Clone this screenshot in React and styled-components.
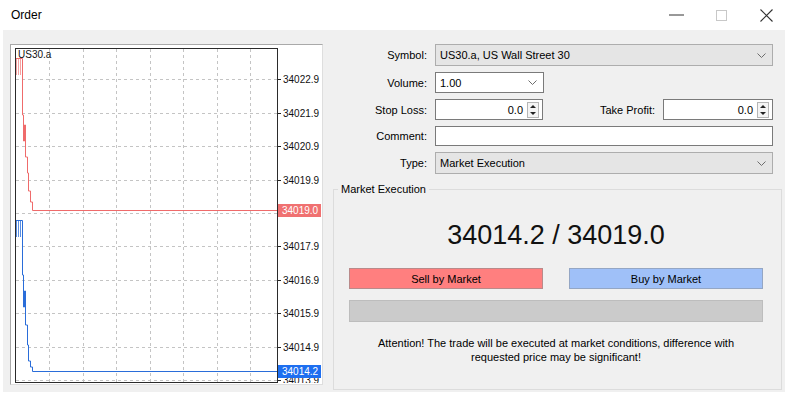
import * as React from 'react';
import styled, { createGlobalStyle } from 'styled-components';

const GlobalStyle = createGlobalStyle`
    html, body {
        margin: 0;
        padding: 0;
        background: #fff;
    }
    body {
        font-family: "Liberation Sans", Arial, sans-serif;
        font-size: 11px;
        color: #000;
    }
`;

const Window = styled.div`
    width: 794px;
    height: 404px;
    background: #fff;
    display: flex;
    flex-direction: column;
`;

const TitleBar = styled.div`
    height: 30px;
    display: flex;
    align-items: center;
    justify-content: space-between;
    padding: 0 5px 0 11px;
`;

const Title = styled.div`
    font-size: 12px;
    color: #000;
`;

const Controls = styled.div`
    display: flex;
    height: 100%;
`;

const CtrlButton = styled.div`
    width: 45px;
    height: 100%;
    display: flex;
    align-items: center;
    justify-content: center;
`;

const Body = styled.div`
    height: 362px;
    margin: 0 9px 0 3px;
    padding: 14px 0 2px 7px;
    box-sizing: border-box;
    background: #f0f0f0;
    display: flex;
    gap: 10px;
`;

const ChartPanel = styled.div`
    width: 313px;
    height: 341px;
    box-sizing: border-box;
    background: #fff;
    border-top: 1px solid #a9a9a9;
    border-left: 1px solid #a9a9a9;
    border-right: 1px solid #dedede;
    border-bottom: 1px solid #dedede;
    overflow: hidden;
`;

const Side = styled.div`
    width: 449px;
    display: flex;
    flex-direction: column;
`;

const Form = styled.div`
    display: grid;
    grid-template-columns: 94px 1fr;
    column-gap: 8px;
    row-gap: 6px;
    padding-right: 9px;
`;

const Label = styled.div`
    text-align: right;
    align-self: center;
    white-space: nowrap;
`;

const FieldRow = styled.div`
    display: flex;
    align-items: center;
    height: ${p => p.$h}px;
`;

const Select = styled.div`
    box-sizing: border-box;
    height: ${p => p.$h}px;
    width: ${p => (p.$w ? `${p.$w}px` : '100%')};
    background: ${p => (p.$gray ? '#e5e5e5' : '#fff')};
    border: 1px solid ${p => (p.$gray ? '#adadad' : '#7a7a7a')};
    display: flex;
    align-items: center;
    justify-content: space-between;
    padding: 0 6px 0 4px;
`;

const TextInput = styled.div`
    box-sizing: border-box;
    height: ${p => p.$h}px;
    width: 100%;
    background: #fff;
    border: 1px solid #7a7a7a;
`;

const SpinBox = styled.div`
    box-sizing: border-box;
    height: 21px;
    width: ${p => p.$w}px;
    background: #fff;
    border: 1px solid #7a7a7a;
    display: flex;
    align-items: center;
    justify-content: flex-end;
    padding-right: 3px;
    gap: 4px;
`;

const Spinner = styled.div`
    box-sizing: border-box;
    width: 12px;
    height: 16px;
    border: 1px solid #b5b5b5;
    background: #f4f4f4;
    display: flex;
    flex-direction: column;
    justify-content: space-around;
    align-items: center;
`;

const Arrow = styled.div`
    width: 0;
    height: 0;
    border-left: 3px solid transparent;
    border-right: 3px solid transparent;
    ${p => (p.$up ? 'border-bottom: 3px solid #222;' : 'border-top: 3px solid #222;')}
`;

const InlineLabel = styled.div`
    flex: 1;
    text-align: right;
    padding-right: 8px;
`;

const Group = styled.fieldset`
    flex: 1;
    margin: 8px 0 0 0;
    min-width: 0;
    border: 1px solid #dcdcdc;
    padding: 0 18px 0 15px;
    display: flex;
    flex-direction: column;
`;

const Legend = styled.legend`
    font-size: 11px;
    line-height: 14px;
    padding: 0 3px;
    margin-left: -11px;
`;

const Quote = styled.div`
    margin-top: 26px;
    font-size: 27px;
    line-height: 27px;
    text-align: center;
    color: #111;
`;

const ButtonRow = styled.div`
    margin-top: 19px;
    display: flex;
    justify-content: space-between;
`;

const TradeButton = styled.div`
    box-sizing: border-box;
    width: 194px;
    height: 21px;
    display: flex;
    align-items: center;
    justify-content: center;
    background: ${p => (p.$sell ? '#ff7f7f' : '#9fc0f8')};
    border: 1px solid ${p => (p.$sell ? '#b98a8a' : '#94a6c4')};
    color: #000;
`;

const ProgressBar = styled.div`
    margin-top: 11px;
    box-sizing: border-box;
    height: 22px;
    background: #cbcbcb;
    border: 1px solid #bdbdbd;
`;

const Notice = styled.div`
    margin-top: 14px;
    text-align: center;
    line-height: 14px;
`;

const Chevron = () => (
    <svg width="9" height="5" viewBox="0 0 9 5">
        <polyline points="0.5,0.5 4.5,4.5 8.5,0.5" fill="none" stroke="#6d6d6d" strokeWidth="1" />
    </svg>
);

const top = 34022.9;
const yOf = p => 34.3 + (top - p) * 33.4;
const levels = Array.from({ length: 10 }, (_, k) => (top - k).toFixed(1));

const PriceChart = () => {
    const verts = Array.from({ length: 7 }, (_, i) => Math.round(38 + 33.5 * i) + 0.5);
    return (
        <svg width="311" height="338" viewBox="0 0 311 338" style={{ display: 'block' }}>
            {verts.map(x => (
                <line key={x} x1={x} y1={4} x2={x} y2={337} stroke="#c4c4c4" strokeDasharray="3 3" />
            ))}
            {levels.map(p => {
                const y = Math.round(yOf(parseFloat(p))) + 0.5;
                return (
                    <g key={p}>
                        <line x1={5} y1={y} x2={266} y2={y} stroke="#c4c4c4" strokeDasharray="3 3" />
                        <line x1={266} y1={y} x2={270} y2={y} stroke="#222" />
                        <text x={272} y={y + 3.5} fontSize="10" fontFamily="Liberation Sans, Arial, sans-serif" fill="#111">{p}</text>
                    </g>
                );
            })}
            <text x={7} y={13} fontSize="10" fontFamily="Liberation Sans, Arial, sans-serif" fill="#111">US30.a</text>

            {[5.5, 7.5, 9.5].map(x => (
                <line key={x} x1={x} y1={13} x2={x} y2={30} stroke="#f3a3a3" />
            ))}
            <path d="M5 13.5 H11.5 V70 H12.5 V96 H13.5 V80 H14.5 V112 H16.5 V128 H17.5 V146 H19.5 V157 H21.5 V165.5 H266" fill="none" stroke="#ef6b6b" />

            {[5.5, 7.5, 9.5].map(x => (
                <line key={x} x1={x} y1={175} x2={x} y2={192} stroke="#5b8fe2" />
            ))}
            <path d="M5 175.5 H11.5 V230 H12.5 V262 H13.5 V246 H14.5 V280 H16.5 V300 H17.5 V316 H19.5 V322 H21.5 V326.5 H266" fill="none" stroke="#2a6dd9" />

            <rect x={4.5} y={3.5} width={262} height={334} fill="none" stroke="#2b2b2b" />

            <rect x={267} y={159} width={43} height={13} fill="#f07171" />
            <text x={271} y={169} fontSize="10" fontFamily="Liberation Sans, Arial, sans-serif" fill="#fff">34019.0</text>
            <rect x={267} y={320} width={43} height={13} fill="#1e6ff0" />
            <text x={271} y={330} fontSize="10" fontFamily="Liberation Sans, Arial, sans-serif" fill="#fff">34014.2</text>
        </svg>
    );
};

const SpinField = ({ width }) => (
    <SpinBox $w={width}>
        <span>0.0</span>
        <Spinner>
            <Arrow $up />
            <Arrow />
        </Spinner>
    </SpinBox>
);

const App = () => {
    return (
        <Window>
            <GlobalStyle />
            <TitleBar>
                <Title>Order</Title>
                <Controls>
                    <CtrlButton>
                        <svg width="15" height="2" viewBox="0 0 15 2"><line x1="0" y1="1" x2="15" y2="1" stroke="#333" /></svg>
                    </CtrlButton>
                    <CtrlButton>
                        <svg width="11" height="11" viewBox="0 0 11 11"><rect x="0.5" y="0.5" width="10" height="10" fill="none" stroke="#c8c8c8" /></svg>
                    </CtrlButton>
                    <CtrlButton>
                        <svg width="13" height="13" viewBox="0 0 13 13">
                            <path d="M0.5 0.5 L12.5 12.5 M12.5 0.5 L0.5 12.5" stroke="#333" strokeWidth="1.1" />
                        </svg>
                    </CtrlButton>
                </Controls>
            </TitleBar>
            <Body>
                <ChartPanel>
                    <PriceChart />
                </ChartPanel>
                <Side>
                    <Form>
                        <Label>Symbol:</Label>
                        <FieldRow $h={22}>
                            <Select $h={22} $gray>
                                <span>US30.a, US Wall Street 30</span>
                                <Chevron />
                            </Select>
                        </FieldRow>

                        <Label>Volume:</Label>
                        <FieldRow $h={21}>
                            <Select $h={21} $w={109}>
                                <span>1.00</span>
                                <Chevron />
                            </Select>
                        </FieldRow>

                        <Label>Stop Loss:</Label>
                        <FieldRow $h={21}>
                            <SpinField width={108} />
                            <InlineLabel>Take Profit:</InlineLabel>
                            <SpinField width={110} />
                        </FieldRow>

                        <Label>Comment:</Label>
                        <FieldRow $h={20}>
                            <TextInput $h={20} />
                        </FieldRow>

                        <Label>Type:</Label>
                        <FieldRow $h={22}>
                            <Select $h={22} $gray>
                                <span>Market Execution</span>
                                <Chevron />
                            </Select>
                        </FieldRow>
                    </Form>

                    <Group>
                        <Legend>Market Execution</Legend>
                        <Quote>34014.2 / 34019.0</Quote>
                        <ButtonRow>
                            <TradeButton $sell>Sell by Market</TradeButton>
                            <TradeButton>Buy by Market</TradeButton>
                        </ButtonRow>
                        <ProgressBar />
                        <Notice>
                            Attention! The trade will be executed at market conditions, difference with<br />
                            requested price may be significant!
                        </Notice>
                    </Group>
                </Side>
            </Body>
        </Window>
    );
};

export default App;
